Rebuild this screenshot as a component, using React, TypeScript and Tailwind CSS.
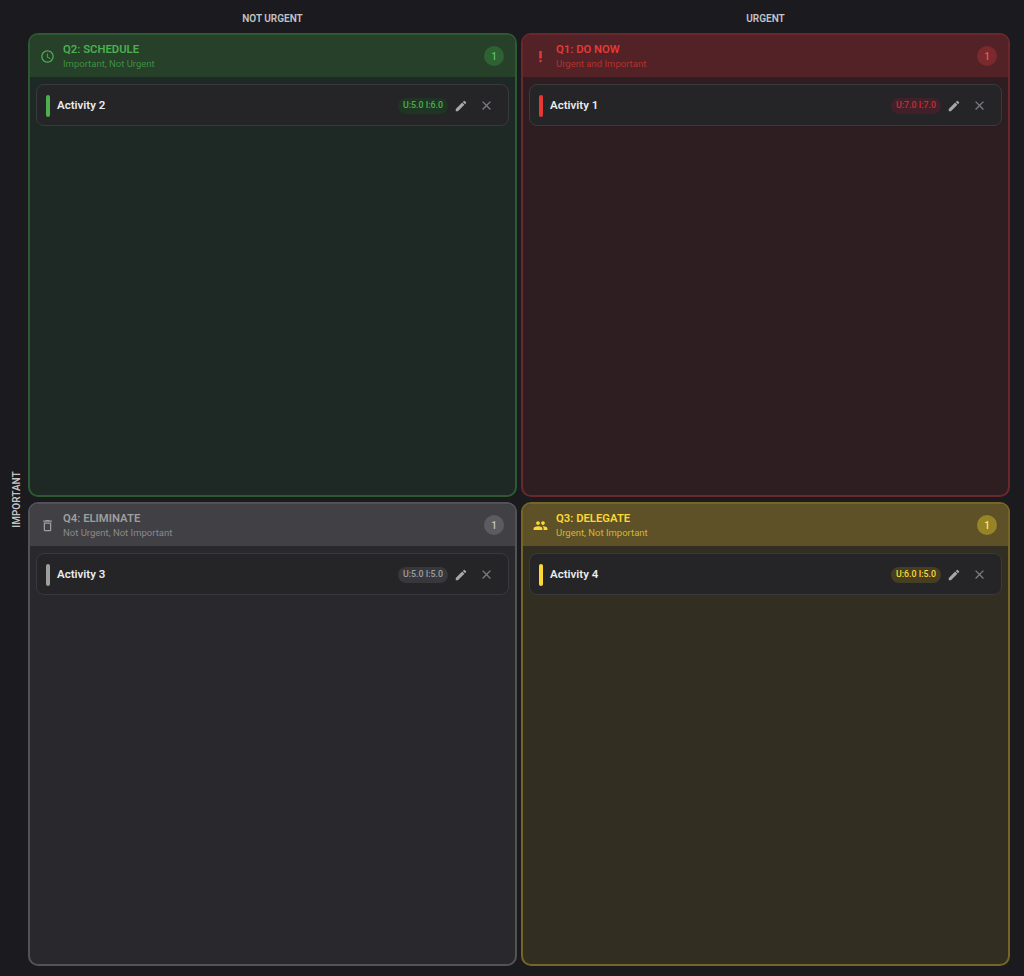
import React from "react";

type Q = {
  key: string;
  title: string;
  subtitle: string;
  icon: "clock" | "bang" | "trash" | "people";
  border: string;
  header: string;
  body: string;
  titleC: string;
  subC: string;
  countBg: string;
  countC: string;
  badgeBg: string;
  badgeC: string;
  bar: string;
  activity: string;
  score: string;
};

const quads: Q[] = [
  {
    key: "q2",
    title: "Q2: SCHEDULE",
    subtitle: "Important, Not Urgent",
    icon: "clock",
    border: "border-[#2d5a31]",
    header: "bg-[#26402a]",
    body: "bg-[#1e2824]",
    titleC: "text-[#4caf50]",
    subC: "text-[#3f8f43]",
    countBg: "bg-[#2e6232]",
    countC: "text-[#5fc063]",
    badgeBg: "bg-[#1f3524]",
    badgeC: "text-[#4caf50]",
    bar: "bg-[#4caf50]",
    activity: "Activity 2",
    score: "U:5.0 I:6.0",
  },
  {
    key: "q1",
    title: "Q1: DO NOW",
    subtitle: "Urgent and Important",
    icon: "bang",
    border: "border-[#6a282c]",
    header: "bg-[#532226]",
    body: "bg-[#2e1d21]",
    titleC: "text-[#e53935]",
    subC: "text-[#b53030]",
    countBg: "bg-[#7a2a2c]",
    countC: "text-[#e0605c]",
    badgeBg: "bg-[#42202a]",
    badgeC: "text-[#c4302f]",
    bar: "bg-[#e53935]",
    activity: "Activity 1",
    score: "U:7.0 I:7.0",
  },
  {
    key: "q4",
    title: "Q4: ELIMINATE",
    subtitle: "Not Urgent, Not Important",
    icon: "trash",
    border: "border-[#535357]",
    header: "bg-[#404045]",
    body: "bg-[#28282d]",
    titleC: "text-[#9e9e9e]",
    subC: "text-[#8a8a8c]",
    countBg: "bg-[#5c5c60]",
    countC: "text-[#c4c4c4]",
    badgeBg: "bg-[#38383c]",
    badgeC: "text-[#9e9e9e]",
    bar: "bg-[#9e9e9e]",
    activity: "Activity 3",
    score: "U:5.0 I:5.0",
  },
  {
    key: "q3",
    title: "Q3: DELEGATE",
    subtitle: "Urgent, Not Important",
    icon: "people",
    border: "border-[#766626]",
    header: "bg-[#5e5128]",
    body: "bg-[#332e22]",
    titleC: "text-[#fdd835]",
    subC: "text-[#d2b630]",
    countBg: "bg-[#978426]",
    countC: "text-[#ffe97a]",
    badgeBg: "bg-[#463e22]",
    badgeC: "text-[#fdd835]",
    bar: "bg-[#fdd835]",
    activity: "Activity 4",
    score: "U:6.0 I:5.0",
  },
];

function Icon({ name, className }: { name: Q["icon"]; className: string }) {
  if (name === "clock")
    return (
      <svg viewBox="0 0 24 24" className={className} fill="currentColor">
        <path d="M11.99 2C6.47 2 2 6.48 2 12s4.47 10 9.99 10C17.52 22 22 17.52 22 12S17.52 2 11.99 2zM12 20c-4.42 0-8-3.58-8-8s3.58-8 8-8 8 3.58 8 8-3.58 8-8 8zm.5-13H11v6l5.25 3.15.75-1.23-4.5-2.67z" />
      </svg>
    );
  if (name === "bang")
    return (
      <svg viewBox="0 0 24 24" className={className} fill="currentColor">
        <circle cx="12" cy="19" r="2" />
        <path d="M10 3h4v12h-4z" />
      </svg>
    );
  if (name === "trash")
    return (
      <svg viewBox="0 0 24 24" className={className} fill="currentColor">
        <path d="M6 19c0 1.1.9 2 2 2h8c1.1 0 2-.9 2-2V7H6v12zM8 9h8v10H8V9zm7.5-5l-1-1h-5l-1 1H5v2h14V4z" />
      </svg>
    );
  return (
    <svg viewBox="0 0 24 24" className={className} fill="currentColor">
      <path d="M16 11c1.66 0 2.99-1.34 2.99-3S17.66 5 16 5c-1.660 0-3 1.34-3 3s1.34 3 3 3zm-8 0c1.66 0 2.99-1.34 2.99-3S9.66 5 8 5C6.34 5 5 6.34 5 8s1.34 3 3 3zm0 2c-2.33 0-7 1.17-7 3.5V19h14v-2.5c0-2.33-4.67-3.5-7-3.5zm8 0c-.29 0-.62.02-.97.05 1.16.84 1.970 1.97 1.97 3.45V19h6v-2.5c0-2.33-4.67-3.5-7-3.5z" />
    </svg>
  );
}

function Quadrant({ q }: { q: Q }) {
  return (
    <div className={`flex flex-col min-h-0 rounded-[10px] border-2 overflow-hidden ${q.border} ${q.body}`}>
      <div className={`h-[42px] shrink-0 flex items-center pl-[10px] pr-[11px] ${q.header}`}>
        <Icon name={q.icon} className={`w-[15px] h-[15px] ${q.titleC}`} />
        <div className="ml-[8px] flex flex-col leading-none">
          <span className={`text-[11.3px] font-semibold ${q.titleC}`}>{q.title}</span>
          <span className={`mt-[4px] text-[9.5px] ${q.subC}`}>{q.subtitle}</span>
        </div>
        <div
          className={`ml-auto w-[20px] h-[20px] rounded-full flex items-center justify-center text-[10px] font-medium ${q.countBg} ${q.countC}`}
        >
          1
        </div>
      </div>
      <div className="flex-1 p-[6px] pt-[7px]">
        <div className="h-[42px] flex items-center rounded-[8px] border border-[#3a3a3e] bg-[#252528] pl-[9px] pr-[10px] pt-[1px]">
          <div className={`w-[4px] h-[22px] rounded-full ${q.bar}`} />
          <span className="ml-[7px] text-[11.5px] font-semibold text-[#ececec]">{q.activity}</span>
          <span
            className={`ml-auto h-[16px] px-[5px] rounded-full flex items-center text-[8.8px] font-medium ${q.badgeBg} ${q.badgeC}`}
          >
            {q.score}
          </span>
          <button className="ml-[1px] w-[24px] h-[24px] flex items-center justify-center text-[#a8a8ab]">
            <svg viewBox="0 0 24 24" className="w-[14px] h-[14px]" fill="currentColor">
              <path d="M3 17.25V21h3.75L17.81 9.94l-3.75-3.75L3 17.25zM20.71 7.04c.39-.39.39-1.02 0-1.41l-2.34-2.34a.9959.9959 0 0 0-1.41 0l-1.83 1.83 3.75 3.75 1.83-1.83z" />
            </svg>
          </button>
          <button className="ml-[1px] w-[24px] h-[24px] flex items-center justify-center text-[#7c7c80]">
            <svg viewBox="0 0 24 24" className="w-[15px] h-[15px]" fill="currentColor">
              <path d="M19 6.41 17.59 5 12 10.59 6.41 5 5 6.41 10.59 12 5 17.59 6.41 19 12 13.41 17.59 19 19 17.59 13.41 12z" />
            </svg>
          </button>
        </div>
      </div>
    </div>
  );
}

export default function App() {
  return (
    <div
      className="w-full h-[976px] bg-[#1b1b1f] flex pr-[14px] pb-[10px]"
      style={{ fontFamily: "Roboto, 'Noto Sans', sans-serif" }}
    >
      <div className="w-[28px] shrink-0 flex flex-col">
        <div className="h-[33px] shrink-0" />
        <div className="flex-1 flex items-center justify-center pl-[4px]">
          <span className="-rotate-90 whitespace-nowrap text-[10px] font-semibold text-[#c4c4c6]">
            IMPORTANT
          </span>
        </div>
      </div>
      <div className="flex-1 flex flex-col min-w-0">
        <div className="h-[33px] shrink-0 grid grid-cols-2 gap-x-[4px] items-center pt-[3px]">
          <div className="text-center text-[10px] font-semibold text-[#c4c4c6]">NOT URGENT</div>
          <div className="text-center text-[10px] font-semibold text-[#c4c4c6]">URGENT</div>
        </div>
        <div className="flex-1 min-h-0 grid grid-cols-2 grid-rows-2 gap-x-[4px] gap-y-[5px]">
          {quads.map((q) => (
            <Quadrant key={q.key} q={q} />
          ))}
        </div>
      </div>
    </div>
  );
}
